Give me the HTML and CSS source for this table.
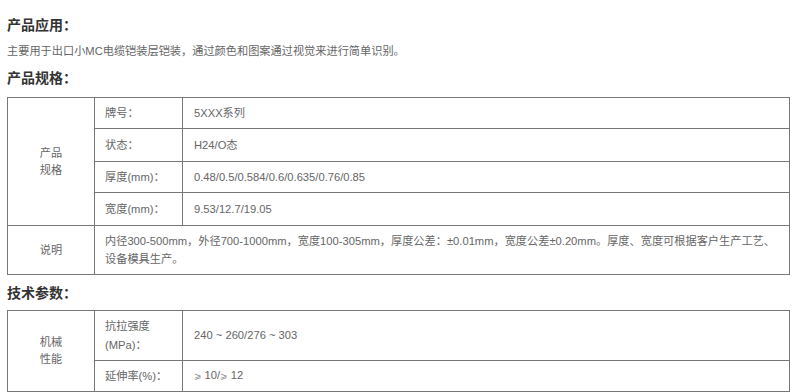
FILE: index.html
```html
<!DOCTYPE html>
<html lang="zh-CN">
<head>
<meta charset="utf-8">
<title>产品</title>
<link rel="stylesheet" href="styles.css">
</head>
<body>
<div class="page">
  <h2 class="title first">产品应用：</h2>
  <p class="desc">主要用于出口小MC电缆铠装层铠装，通过颜色和图案通过视觉来进行简单识别。</p>
  <h2 class="title second">产品规格：</h2>
  <table class="spec">
    <colgroup><col class="c1"><col class="c2"><col class="c3"></colgroup>
    <tr class="r31">
      <td class="group" rowspan="4">产品<br>规格</td>
      <td class="key">牌号：</td>
      <td class="val">5XXX系列</td>
    </tr>
    <tr class="r33">
      <td class="key">状态：</td>
      <td class="val">H24/O态</td>
    </tr>
    <tr class="r31">
      <td class="key">厚度(mm)：</td>
      <td class="val">0.48/0.5/0.584/0.6/0.635/0.76/0.85</td>
    </tr>
    <tr class="r33">
      <td class="key">宽度(mm)：</td>
      <td class="val">9.53/12.7/19.05</td>
    </tr>
    <tr class="r49">
      <td class="group">说明</td>
      <td class="note" colspan="2">内径300-500mm，外径700-1000mm，宽度100-305mm，厚度公差：±0.01mm，宽度公差±0.20mm。厚度、宽度可根据客户生产工艺、设备模具生产。</td>
    </tr>
  </table>
  <h2 class="title third">技术参数：</h2>
  <table class="spec">
    <colgroup><col class="c1"><col class="c2"><col class="c3"></colgroup>
    <tr class="r50">
      <td class="group" rowspan="2">机械<br>性能</td>
      <td class="key tall">抗拉强度<br>(MPa)：</td>
      <td class="val">240 ~ 260/276 ~ 303</td>
    </tr>
    <tr class="r31">
      <td class="key">延伸率(%)：</td>
      <td class="val"><span class="ge">⩾</span>10/<span class="ge">⩾</span>12</td>
    </tr>
  </table>
</div>
</body>
</html>
```
FILE: styles.css
```css
html, body {
  margin: 0;
  padding: 0;
  background: #ffffff;
}
body {
  font-family: "Liberation Sans", "Noto Sans CJK SC", sans-serif;
  color: #666666;
  font-size: 11.2px;
}
.page {
  padding: 15px 10px 0 7px;
  width: 783px;
}
.title {
  margin: 0;
  font-size: 14px;
  line-height: 20px;
  font-weight: bold;
  color: #333333;
}
.title.second { margin-top: 7px; }
.title.third { margin-top: 8px; }
.desc {
  margin: 6px 0 0 0;
  line-height: 20px;
  color: #666666;
}
.spec {
  border-collapse: collapse;
  width: 783px;
  table-layout: fixed;
  margin-top: 9px;
  border: 1px solid #777777;
}
.title.third + .spec { margin-top: 7px; }
.c1 { width: 87px; }
.c2 { width: 88px; }
.spec td {
  border: 1px solid #777777;
  padding: 0 10px;
  vertical-align: middle;
  line-height: 17px;
}
.spec .group {
  text-align: center;
}
.spec .val {
  padding-left: 11px;
}
.spec .note {
  line-height: 18px;
}
.spec .tall {
  line-height: 19px;
}
.ge {
  font-family: "DejaVu Sans", sans-serif;
  font-size: 9px;
  color: #888888;
  margin-right: 3px;
}
.r31 { height: 31px; }
.r33 { height: 33px; }
.r49 { height: 49px; }
.r50 { height: 50px; }
```
